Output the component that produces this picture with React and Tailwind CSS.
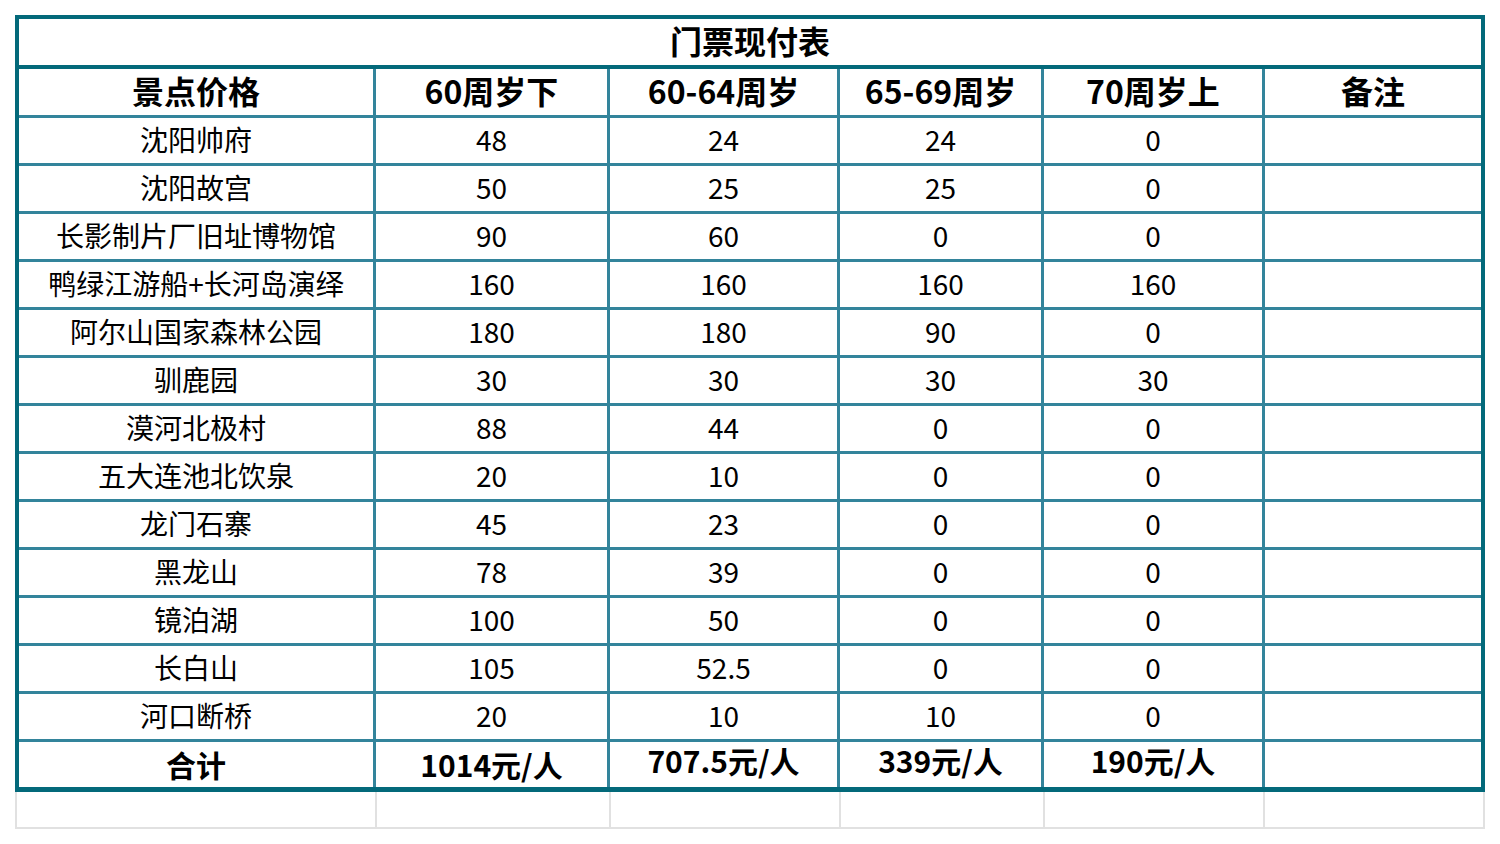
import React from 'react';

const rows = [
  ['沈阳帅府', '48', '24', '24', '0'],
  ['沈阳故宫', '50', '25', '25', '0'],
  ['长影制片厂旧址博物馆', '90', '60', '0', '0'],
  ['鸭绿江游船+长河岛演绎', '160', '160', '160', '160'],
  ['阿尔山国家森林公园', '180', '180', '90', '0'],
  ['驯鹿园', '30', '30', '30', '30'],
  ['漠河北极村', '88', '44', '0', '0'],
  ['五大连池北饮泉', '20', '10', '0', '0'],
  ['龙门石寨', '45', '23', '0', '0'],
  ['黑龙山', '78', '39', '0', '0'],
  ['镜泊湖', '100', '50', '0', '0'],
  ['长白山', '105', '52.5', '0', '0'],
  ['河口断桥', '20', '10', '10', '0'],
];

const headers = ['景点价格', '60周岁下', '60-64周岁', '65-69周岁', '70周岁上', '备注'];

const totals = [
  { text: '合计', cls: 'pb-[2px]' },
  { text: '1014元/人', cls: 'pb-[2px]' },
  { text: '707.5元/人', cls: 'pb-[10px]' },
  { text: '339元/人', cls: 'pb-[10px]' },
  { text: '190元/人', cls: 'pb-[10px]' },
  { text: '', cls: '' },
];

const cols = 'grid grid-cols-[354px_231px_227px_201px_218px_216px] gap-[3px]';

export default function App() {
  return (
    <div
      className="w-[1500px] h-[844px] bg-white pt-[15px] px-[15px] text-black"
      style={{ fontFamily: '"Noto Sans CJK SC", "Noto Sans", sans-serif' }}
    >
      <div className="w-[1470px] border-x-4 border-t-4 border-b-[5px] border-[#03697a]">
        {/* title */}
        <div className="h-[50px] pb-[4px] flex items-center justify-center text-[32px] font-bold leading-none border-b-4 border-[#03697a]">
          门票现付表
        </div>

        <div className={`${cols} bg-[#33849b]`}>
          {headers.map((h) => (
            <div key={h} className="h-[46px] pb-[4px] bg-white flex items-center justify-center text-[32px] font-bold leading-none">
              {h}
            </div>
          ))}
          {rows.map((r) =>
            [...r, ''].map((c, i) => (
              <div key={r[0] + i} className="h-[45px] pb-[4px] bg-white flex items-center justify-center text-[28px] leading-none">
                {c}
              </div>
            ))
          )}
          {totals.map((t, i) => (
            <div key={i} className={`h-[45px] bg-white flex items-center justify-center text-[30px] font-bold leading-none ${t.cls}`}>
              {t.text}
            </div>
          ))}
        </div>
      </div>

      {/* empty sheet row below */}
      <div className="w-[1470px] border-x-2 border-b-2 border-[#e1e1e1] bg-[#e1e1e1] grid grid-cols-[358px_232px_228px_202px_218px_218px] gap-[2px]">
        {[0, 1, 2, 3, 4, 5].map((i) => (
          <div key={i} className="h-[35px] bg-white" />
        ))}
      </div>
    </div>
  );
}
